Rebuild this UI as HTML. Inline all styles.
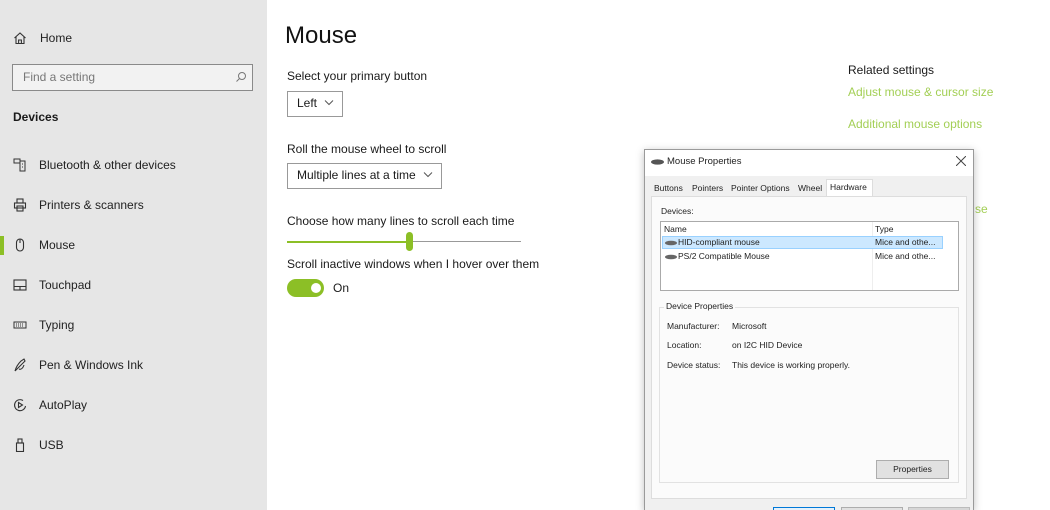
<!DOCTYPE html>
<html style="width:1050px;height:510px;overflow:hidden"><head><meta charset="utf-8"><style>
*{margin:0;padding:0;box-sizing:border-box}
body{width:1050px;height:510px;overflow:hidden;position:relative;background:#fff;font-family:"Liberation Sans",sans-serif;color:#1a1a1a}
.side{position:absolute;left:0;top:0;width:267px;height:510px;background:#e6e6e6}
.a{position:absolute;white-space:nowrap}
.s{font-size:12px}
.nav{font-size:12px;color:#222}
.ic{position:absolute;left:13px;width:14px;height:14px}
.green{color:#a3cf55}
.dlg{position:absolute;left:644px;top:149px;width:330px;height:361px;background:#f0f0f0;border:1px solid #9a9a9a;border-bottom:none;box-shadow:0 2px 8px rgba(0,0,0,.25);font-size:8.5px;color:#222;overflow:hidden}
.dlg .a{font-size:8.5px}
</style></head><body>
<div class="side">
<svg class="ic" style="top:31px" viewBox="0 0 14 14" fill="none" stroke="#333" stroke-width="1.1"><path d="M1.5 7 L7 2 L12.5 7 M3 5.8 V12.5 H11 V5.8 M5.6 12.5 V9 H8.4 V12.5"/></svg>
<div class="a nav" style="left:40px;top:31px">Home</div>
<div class="a" style="left:12px;top:64px;width:241px;height:27px;border:1.5px solid #8a8a8a;background:#f2f2f2"></div>
<div class="a" style="left:23px;top:70px;font-size:12px;color:#777">Find a setting</div>
<svg class="a" style="left:235px;top:71px" width="12" height="12" viewBox="0 0 12 12" fill="none" stroke="#777"><circle cx="7" cy="5" r="3.5"/><path d="M4.5 7.5 L1.5 10.5"/></svg>
<div class="a" style="left:13px;top:110px;font-size:12px;font-weight:bold">Devices</div>
<svg class="ic" style="top:158px" viewBox="0 0 14 14" fill="none" stroke="#333" stroke-width="1"><rect x="1" y="1" width="6" height="4"/><rect x="7" y="3" width="5" height="10"/><path d="M9 6h1M9 9h1"/></svg>
<div class="a nav" style="left:39px;top:158px">Bluetooth &amp; other devices</div>
<svg class="ic" style="top:198px" viewBox="0 0 14 14" fill="none" stroke="#333" stroke-width="1.1"><rect x="4" y="1" width="6" height="4"/><rect x="1.5" y="5" width="11" height="5"/><rect x="4" y="8" width="6" height="5"/></svg>
<div class="a nav" style="left:39px;top:198px">Printers &amp; scanners</div>
<div class="a" style="left:0;top:236px;width:4px;height:19px;background:#8cbf26"></div>
<svg class="ic" style="top:238px" viewBox="0 0 14 14" fill="none" stroke="#333" stroke-width="1.1"><rect x="3.5" y="1" width="7" height="12" rx="3.5"/><path d="M7 1v4"/></svg>
<div class="a nav" style="left:39px;top:238px">Mouse</div>
<svg class="ic" style="top:278px" viewBox="0 0 14 14" fill="none" stroke="#333" stroke-width="1.1"><rect x="1" y="2" width="12" height="10"/><path d="M1 8.5h12M7 8.5v3.5"/></svg>
<div class="a nav" style="left:39px;top:278px">Touchpad</div>
<svg class="ic" style="top:318px" viewBox="0 0 14 14" fill="none" stroke="#333" stroke-width="1"><rect x="1" y="4" width="12" height="6"/><path d="M3 6h8M3 8h8" stroke-dasharray="1 1"/></svg>
<div class="a nav" style="left:39px;top:318px">Typing</div>
<svg class="ic" style="top:358px" viewBox="0 0 14 14" fill="none" stroke="#333" stroke-width="1.1"><path d="M2 13 C3 9 5 6 8 3 L11 1 L12 3 L9 6 C7 8 4 11 2 13 M6 11 C8 12 10 10 11 7"/></svg>
<div class="a nav" style="left:39px;top:358px">Pen &amp; Windows Ink</div>
<svg class="ic" style="top:398px" viewBox="0 0 14 14" fill="none" stroke="#333" stroke-width="1.1"><path d="M12.5 8 A5.5 5.5 0 1 1 10 2.5"/><path d="M5.5 4.5 L9.5 7 L5.5 9.5Z"/></svg>
<div class="a nav" style="left:39px;top:398px">AutoPlay</div>
<svg class="ic" style="top:438px" viewBox="0 0 14 14" fill="none" stroke="#333" stroke-width="1.1"><rect x="3.5" y="5" width="7" height="8.5"/><rect x="5" y="1" width="4" height="4"/></svg>
<div class="a nav" style="left:39px;top:438px">USB</div>
</div>

<div class="a" style="left:285px;top:22px;font-size:24px;color:#111">Mouse</div>
<div class="a s" style="left:287px;top:69px">Select your primary button</div>
<div class="a" style="left:287px;top:91px;width:56px;height:26px;border:1.5px solid #999"></div>
<div class="a s" style="left:297px;top:96px">Left</div>
<svg class="a" style="left:324px;top:99px" width="10" height="7" viewBox="0 0 10 7" fill="none" stroke="#555"><path d="M1 1.5 L5 5.5 L9 1.5"/></svg>
<div class="a s" style="left:287px;top:142px">Roll the mouse wheel to scroll</div>
<div class="a" style="left:287px;top:163px;width:155px;height:26px;border:1.5px solid #999"></div>
<div class="a s" style="left:297px;top:168px">Multiple lines at a time</div>
<svg class="a" style="left:423px;top:171px" width="10" height="7" viewBox="0 0 10 7" fill="none" stroke="#555"><path d="M1 1.5 L5 5.5 L9 1.5"/></svg>
<div class="a s" style="left:287px;top:214px">Choose how many lines to scroll each time</div>
<div class="a" style="left:287px;top:241px;width:122px;height:2px;background:#8cbf26"></div>
<div class="a" style="left:409px;top:241px;width:112px;height:1px;background:#999"></div>
<div class="a" style="left:406px;top:232px;width:7px;height:19px;border-radius:4px;background:#8cbf26"></div>
<div class="a s" style="left:287px;top:257px">Scroll inactive windows when I hover over them</div>
<div class="a" style="left:287px;top:279px;width:37px;height:18px;border-radius:9px;background:#8cbf26"></div>
<div class="a" style="left:311px;top:283px;width:10px;height:10px;border-radius:5px;background:#fff"></div>
<div class="a s" style="left:333px;top:281px">On</div>

<div class="a s" style="left:848px;top:63px">Related settings</div>
<div class="a s green" style="left:848px;top:85px">Adjust mouse &amp; cursor size</div>
<div class="a s green" style="left:848px;top:117px">Additional mouse options</div>
<div class="a s green" style="left:975px;top:202px">se</div>

<div class="dlg">
 <div class="a" style="left:0;top:0;width:328px;height:26px;background:#fff"></div>
 <svg class="a" style="left:6px;top:9px" width="13" height="6" viewBox="0 0 13 6"><ellipse cx="6.5" cy="3" rx="6.5" ry="2.6" fill="#555"/></svg>
 <div class="a" style="left:22px;top:6px;font-size:9.5px!important">Mouse Properties</div>
 <svg class="a" style="left:311px;top:6px" width="10" height="10" viewBox="0 0 10 10" stroke="#444" stroke-width="1"><path d="M0 0 L10 10 M10 0 L0 10"/></svg>
 <div class="a" style="left:9px;top:33px">Buttons</div>
 <div class="a" style="left:47px;top:33px">Pointers</div>
 <div class="a" style="left:86px;top:33px">Pointer Options</div>
 <div class="a" style="left:153px;top:33px">Wheel</div>
 <div class="a" style="left:181px;top:29px;width:47px;height:18px;background:#fff;border:1px solid #ddd;border-bottom:none"></div>
 <div class="a" style="left:185px;top:32px">Hardware</div>
 <div class="a" style="left:6px;top:46px;width:316px;height:303px;background:#fbfbfb;border:1px solid #ddd"></div>
 <div class="a" style="left:16px;top:56px">Devices:</div>
 <div class="a" style="left:15px;top:71px;width:299px;height:70px;background:#fff;border:1px solid #aaa"></div>
 <div class="a" style="left:227px;top:72px;width:1px;height:68px;background:#eee"></div>
 <div class="a" style="left:19px;top:74px">Name</div>
 <div class="a" style="left:230px;top:74px">Type</div>
 <div class="a" style="left:17px;top:86px;width:281px;height:13px;background:#cce8ff;border:1px solid #99d1ff"></div>
 <svg class="a" style="left:20px;top:90px" width="12" height="6" viewBox="0 0 12 6"><ellipse cx="6" cy="3" rx="6" ry="2.3" fill="#666"/></svg>
 <div class="a" style="left:33px;top:87px">HID-compliant mouse</div>
 <div class="a" style="left:230px;top:87px">Mice and othe...</div>
 <svg class="a" style="left:20px;top:104px" width="12" height="6" viewBox="0 0 12 6"><ellipse cx="6" cy="3" rx="6" ry="2.3" fill="#666"/></svg>
 <div class="a" style="left:33px;top:101px">PS/2 Compatible Mouse</div>
 <div class="a" style="left:230px;top:101px">Mice and othe...</div>
 <div class="a" style="left:14px;top:157px;width:300px;height:176px;border:1px solid #e2e2e2"></div>
 <div class="a" style="left:19px;top:151px;background:#fbfbfb;padding:0 2px">Device Properties</div>
 <div class="a" style="left:22px;top:171px">Manufacturer:</div>
 <div class="a" style="left:87px;top:171px">Microsoft</div>
 <div class="a" style="left:22px;top:190px">Location:</div>
 <div class="a" style="left:87px;top:190px">on I2C HID Device</div>
 <div class="a" style="left:22px;top:210px">Device status:</div>
 <div class="a" style="left:87px;top:210px">This device is working properly.</div>
 <div class="a" style="left:231px;top:310px;width:73px;height:19px;background:#e1e1e1;border:1px solid #adadad;text-align:center;line-height:17px">Properties</div>
 <div class="a" style="left:128px;top:357px;width:62px;height:20px;background:#e5f1fb;border:1px solid #0078d7"></div>
 <div class="a" style="left:196px;top:357px;width:62px;height:20px;background:#e1e1e1;border:1px solid #adadad"></div>
 <div class="a" style="left:263px;top:357px;width:62px;height:20px;background:#d6d6d6;border:1px solid #bbb"></div>
</div>
</body></html>
